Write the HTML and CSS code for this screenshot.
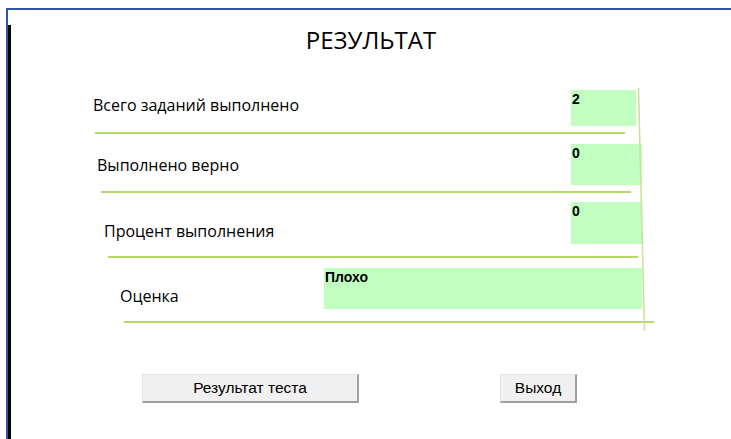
FILE: index.html
```html
<!DOCTYPE html>
<html lang="ru">
<head>
<meta charset="utf-8">
<title>Результат</title>
<link rel="stylesheet" href="styles.css">
</head>
<body>
<div class="window">
  <div class="pane">
    <h1 class="title">РЕЗУЛЬТАТ</h1>

    <div class="rows">
      <div class="row r1">
        <div class="label">Всего заданий выполнено</div>
        <div class="value value--narrow">2</div>
      </div>
      <div class="rule rule1"></div>

      <div class="row r2">
        <div class="label">Выполнено верно</div>
        <div class="value">0</div>
      </div>
      <div class="rule rule2"></div>

      <div class="row r3">
        <div class="label">Процент выполнения</div>
        <div class="value">0</div>
      </div>
      <div class="rule rule3"></div>

      <div class="row r4">
        <div class="label">Оценка</div>
        <div class="value value--wide">Плохо</div>
      </div>
      <div class="rule rule4"></div>
    </div>

    <div class="actions">
      <button class="btn btn--result" type="button">Результат теста</button>
      <button class="btn btn--exit" type="button">Выход</button>
    </div>
  </div>
</div>

<!-- hand-drawn divider running down the right side of the fields -->
<svg class="divider" width="731" height="439" viewBox="0 0 731 439" aria-hidden="true">
  <line x1="638.5" y1="88" x2="644.5" y2="331" stroke="#c9e49a" stroke-width="1.6"/>
</svg>
</body>
</html>
```

FILE: styles.css
```css
html, body {
  margin: 0;
  padding: 0;
  background: #ffffff;
}

body {
  position: relative;
  width: 731px;
  height: 439px;
  overflow: hidden;
  font-family: "Open Sans", "Liberation Sans", sans-serif;
  color: #000;
}

.window {
  margin: 8px 0 0 6px;
  height: 431px;
  border-top: 2px solid #2f55a0;
  border-left: 2px solid #2f55a0;
  box-sizing: border-box;
}

.pane {
  height: 100%;
  border-left: 3px solid #000;
  box-sizing: border-box;
}

.title {
  margin: 15px 0 0;
  font-size: 24px;
  line-height: 30px;
  font-weight: 400;
  text-align: center;
}

.rows {
  margin-top: 35px;
  width: 631px;
}

.row {
  display: flex;
  align-items: flex-start;
}

.label {
  font-size: 16px;
  line-height: 18px;
  white-space: nowrap;
}

.value {
  margin-left: auto;
  width: 71px;
  height: 41px;
  padding: 1px 0 0 1px;
  box-sizing: border-box;
  background: #c0ffc0;
  font-family: "Liberation Sans", Arial, sans-serif;
  font-weight: 700;
  font-size: 14px;
  line-height: 16px;
}

.value--narrow {
  width: 65px;
  height: 36px;
  margin-right: 6px;
}

.value--wide {
  width: 318px;
}

.r1 { margin-left: 82px; }
.r1 .label { padding-top: 6px; }

.r2 { margin-left: 86px; margin-top: 10px; }
.r2 .label { padding-top: 12px; }

.r3 { margin-left: 93px; margin-top: 9px; }
.r3 .label { padding-top: 20px; }
.r3 .value { height: 42px; }

.r4 { margin-left: 109px; margin-top: 10px; }
.r4 .label { padding-top: 19px; }

.rule {
  width: 530px;
  height: 2px;
  background: #b3d968;
}

.rule1 { margin: 6px 0 0 84px; }
.rule2 { margin: 6px 0 0 90px; }
.rule3 { margin: 12px 0 0 97px; }
.rule4 { margin: 12px 0 0 113px; }

.actions {
  display: flex;
  margin: 51px 0 0 131px;
  gap: 141px;
}

.btn {
  height: 29px;
  margin: 0;
  padding: 0;
  background: #f0f0f0;
  border-style: solid;
  border-width: 1px 2px 2px 1px;
  border-color: #e4e4e4 #a0a0a0 #a0a0a0 #e4e4e4;
  font-family: "Liberation Sans", Arial, sans-serif;
  font-size: 15.5px;
  color: #000;
  box-sizing: border-box;
}

.btn--result { width: 217px; }
.btn--exit { width: 77px; }

.divider {
  position: absolute;
  left: 0;
  top: 0;
  pointer-events: none;
}
```
